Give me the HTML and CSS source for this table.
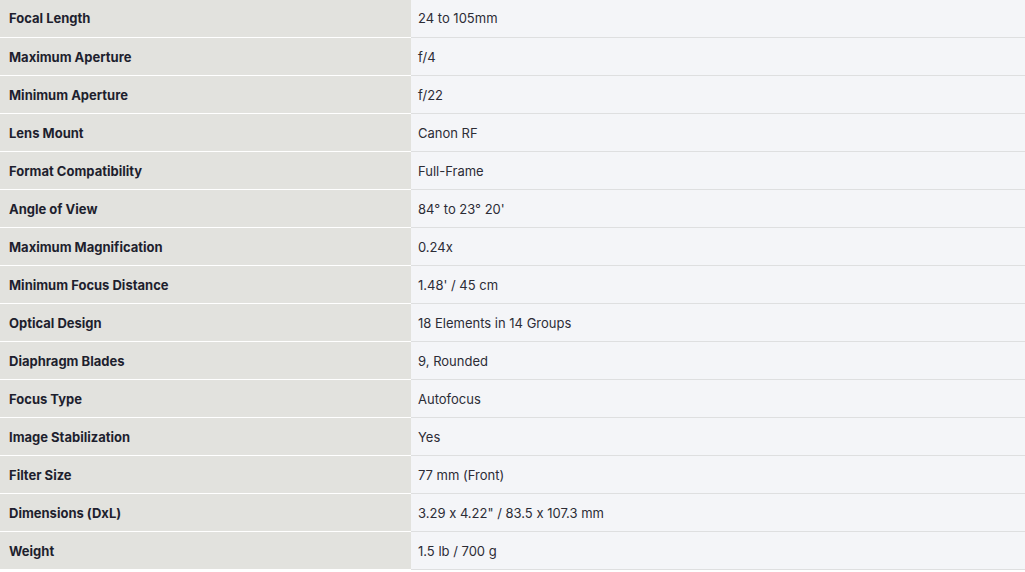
FILE: index.html
```html
<!DOCTYPE html>
<html>
<head>
<meta charset="utf-8">
<link rel="stylesheet" href="styles.css">
</head>
<body>
<table class="specs">
<tbody>
<tr><th>Focal Length</th><td>24 to 105mm</td></tr>
<tr><th>Maximum Aperture</th><td>f/4</td></tr>
<tr><th>Minimum Aperture</th><td>f/22</td></tr>
<tr><th>Lens Mount</th><td>Canon RF</td></tr>
<tr><th>Format Compatibility</th><td>Full-Frame</td></tr>
<tr><th>Angle of View</th><td>84° to 23° 20'</td></tr>
<tr><th>Maximum Magnification</th><td>0.24x</td></tr>
<tr><th>Minimum Focus Distance</th><td>1.48' / 45 cm</td></tr>
<tr><th>Optical Design</th><td>18 Elements in 14 Groups</td></tr>
<tr><th>Diaphragm Blades</th><td>9, Rounded</td></tr>
<tr><th>Focus Type</th><td>Autofocus</td></tr>
<tr><th>Image Stabilization</th><td>Yes</td></tr>
<tr><th>Filter Size</th><td>77 mm (Front)</td></tr>
<tr><th>Dimensions (DxL)</th><td>3.29 x 4.22" / 83.5 x 107.3 mm</td></tr>
<tr><th>Weight</th><td>1.5 lb / 700 g</td></tr>
</tbody>
</table>
</body>
</html>
```

FILE: styles.css
```css
html, body {
  margin: 0;
  padding: 0;
  background: #ffffff;
}
.specs {
  width: 1025px;
  border-collapse: collapse;
  margin-top: -1px;
  font-family: Inter, "Noto Sans", sans-serif;
  font-size: 13px;
  font-feature-settings: "calt" 0;
}
.specs tr {
  height: 38px;
}
.specs th,
.specs td {
  padding: 1px 8px 0 9px;
  text-align: left;
  vertical-align: middle;
}
.specs th {
  width: 411px;
  box-sizing: border-box;
  background: #e2e2de;
  color: #1e1f2e;
  font-weight: 700;
  border-bottom: 1px solid #ffffff;
}
.specs td {
  padding-left: 7px;
  background: #f4f5f8;
  color: #2c2c36;
  font-weight: 400;
  border-bottom: 1px solid #dedfe0;
}
```
